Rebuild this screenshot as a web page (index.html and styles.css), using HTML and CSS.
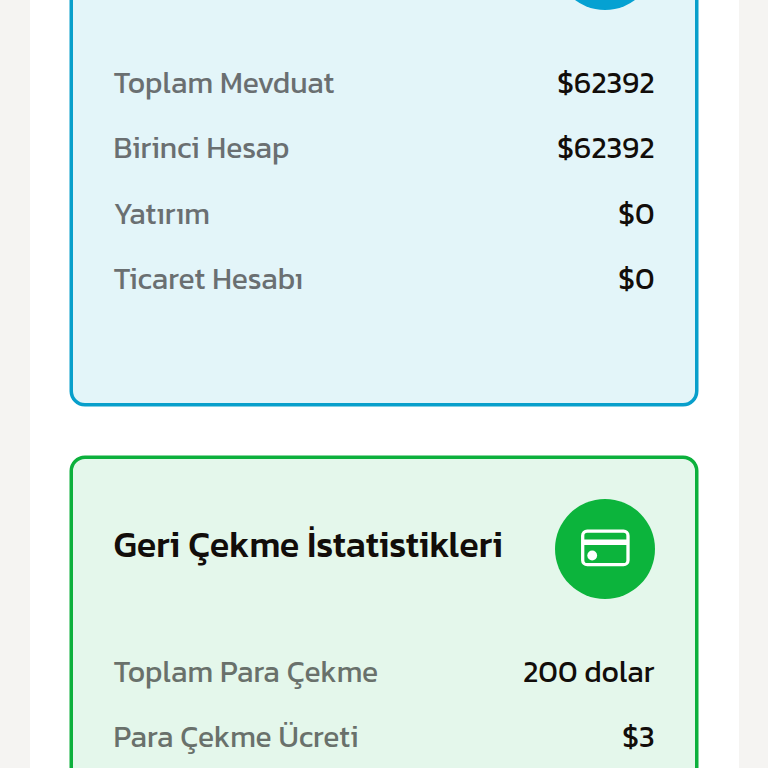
FILE: index.html
```
<!DOCTYPE html>
<html lang="tr">
<head>
    <meta charset="UTF-8">
    <meta name="viewport" content="width=device-width, initial-scale=1.0">
    <title>Hesap İstatistikleri</title>
    <link rel="stylesheet" href="styles.css">
</head>
<body>
    <main class="panel">
        <section class="stat-card deposit">
            <div class="card-header">
                <div class="icon-circle"></div>
            </div>
            <ul class="stat-list">
                <li><span class="label">Toplam Mevduat</span><span class="value">$62392</span></li>
                <li><span class="label">Birinci Hesap</span><span class="value">$62392</span></li>
                <li><span class="label">Yatırım</span><span class="value">$0</span></li>
                <li><span class="label">Ticaret Hesabı</span><span class="value">$0</span></li>
            </ul>
        </section>

        <section class="stat-card withdraw">
            <div class="card-header">
                <h2 class="card-title">Geri Çekme İstatistikleri</h2>
                <div class="icon-circle">
                    <svg width="50" height="38" viewBox="0 0 50 38" fill="none">
                        <rect x="2.7" y="2.2" width="45.3" height="33.5" rx="4.5" stroke="#fff" stroke-width="3.3"/>
                        <path d="M2.5 13.3h45.5" stroke="#fff" stroke-width="5.6"/>
                        <circle cx="12.2" cy="26.5" r="4.9" fill="#fff"/>
                    </svg>
                </div>
            </div>
            <ul class="stat-list">
                <li><span class="label">Toplam Para Çekme</span><span class="value">200 dolar</span></li>
                <li><span class="label">Para Çekme Ücreti</span><span class="value">$3</span></li>
            </ul>
        </section>
    </main>
</body>
</html>
```
FILE: styles.css
```
* {
    box-sizing: border-box;
}
body {
    margin: 0;
    height: 768px;
    overflow: hidden;
    background-color: #f5f4f2;
    font-family: Kanit, 'Noto Sans', sans-serif;
    color: #120d0a;
}
.panel {
    width: 709px;
    height: 768px;
    margin-left: 29.5px;
    padding: 0 40.5px;
    overflow: hidden;
    background-color: #fff;
}
.stat-card {
    padding: 40px 40.5px;
    border: 3px solid;
    border-radius: 15px;
}
.deposit {
    height: 539.5px;
    margin-top: -133.5px;
    margin-bottom: 49.5px;
    border-color: #089fcb;
    background-color: #e3f5f9;
    box-shadow: 0 0 0 0.5px #089fcb;
}
.withdraw {
    height: 541px;
    border-color: #0cb03c;
    background-color: #e4f7eb;
    box-shadow: 0 0 0 0.5px #0cb03c;
}
.card-header {
    display: flex;
    align-items: center;
    justify-content: space-between;
    height: 100px;
    margin-bottom: 40px;
}
.card-title {
    margin: 0 0 10px;
    font-size: 36px;
    font-weight: 500;
    line-height: 50px;
    white-space: nowrap;
}
.icon-circle {
    display: flex;
    align-items: center;
    justify-content: center;
    width: 100px;
    height: 100px;
    margin-left: auto;
    border-radius: 50%;
}
.deposit .icon-circle {
    background-color: #05a1d2;
}
.withdraw .icon-circle {
    background-color: #0cb43c;
}
.icon-circle svg {
    position: relative;
    top: -1px;
}
.stat-list {
    margin: 0;
    padding: 0;
    list-style: none;
}
.stat-list li {
    display: flex;
    align-items: center;
    justify-content: space-between;
    height: 65.5px;
    font-size: 30px;
    white-space: nowrap;
}
.label {
    color: #6a6f71;
}
.withdraw .label {
    color: #69716b;
}
```
